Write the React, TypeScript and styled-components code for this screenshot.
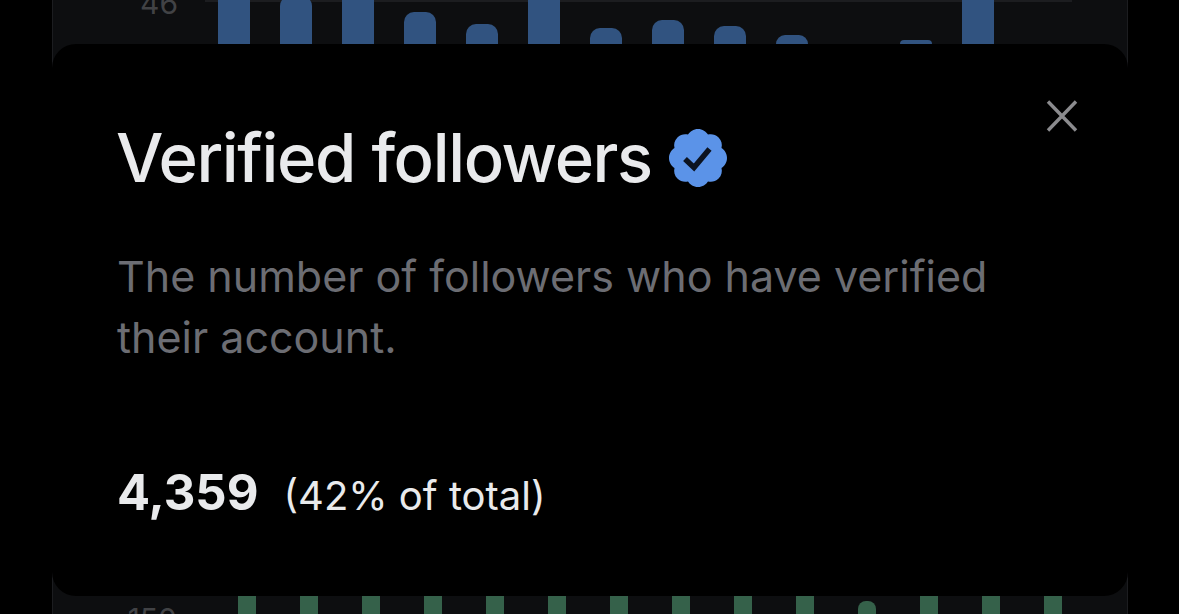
import React from 'react'
import styled, { createGlobalStyle } from 'styled-components'

const blueBars = [
  { height: 48, radius: 0 },
  { height: 48, radius: 10 },
  { height: 48, radius: 0 },
  { height: 32, radius: 10 },
  { height: 20, radius: 10 },
  { height: 48, radius: 0 },
  { height: 16, radius: 10 },
  { height: 24, radius: 10 },
  { height: 18, radius: 10 },
  { height: 9, radius: 10 },
  { height: 0, radius: 0 },
  { height: 4, radius: 10 },
  { height: 48, radius: 0 },
]
const greenBars = [18, 18, 18, 18, 18, 18, 18, 18, 18, 18, 13, 18, 18, 18]

const App = () => {
  return (
    <>
      <GlobalStyle />
      <StyledPage>
        <StyledBackdrop>
          <StyledTopChart>
            <StyledGridLine />
            <StyledTopAxis>46</StyledTopAxis>
            <StyledBlueBars>
              {blueBars.map((bar, i) => (
                <StyledBlueBar key={i} $height={bar.height} $radius={bar.radius} />
              ))}
            </StyledBlueBars>
          </StyledTopChart>
          <StyledBottomChart>
            <StyledBottomAxis>150</StyledBottomAxis>
            <StyledGreenBars>
              {greenBars.map((height, i) => (
                <StyledGreenBar key={i} $height={height} />
              ))}
            </StyledGreenBars>
          </StyledBottomChart>
        </StyledBackdrop>
        <StyledSheet>
          <StyledCloseButton aria-label="Close">
            <svg width="32" height="32" viewBox="0 0 32 32" fill="none">
              <path d="M2 1.500 L30 30.500 M30 1.500 L2 30.500" stroke="#8b8b8e" strokeWidth="3.4" />
            </svg>
          </StyledCloseButton>
          <StyledTitleRow>
            <StyledTitle>Verified followers</StyledTitle>
            <svg width="60" height="60" viewBox="0 0 60 60">
              <path
                fill="#5b93e8"
                d="M30 1c4.500 0 8 2.500 10 5.500 3.600-.9 7.500-.1 10.600 2.900 3 3.100 3.800 7 2.900 10.600 3 2 5.500 5.500 5.500 10s-2.500 8-5.500 10c.9 3.600.1 7.500-2.900 10.600-3.100 3-7 3.800-10.600 2.900-2 3-5.500 5.500-10 5.500s-8-2.500-10-5.500c-3.600.9-7.500.1-10.600-2.900-3-3.100-3.800-7-2.900-10.600-3-2-5.500-5.500-5.500-10s2.500-8 5.500-10c-.9-3.600-.1-7.500 2.900-10.600 3.100-3 7-3.800 10.600-2.900 2-3 5.500-5.500 10-5.500z"
              />
              <path d="M17 31 L26 39.500 L41.500 21" fill="none" stroke="#0c1320" strokeWidth="5.500" />
            </svg>
          </StyledTitleRow>
          <StyledDescription>
            The number of followers who have verified
            <br />
            their account.
          </StyledDescription>
          <StyledStats>
            <StyledCount>4,359</StyledCount>
            <StyledShare>(42% of total)</StyledShare>
          </StyledStats>
        </StyledSheet>
      </StyledPage>
    </>
  )
}
export default App

const GlobalStyle = createGlobalStyle`
  html, body {
    margin: 0;
    background: #000;
  }
`
const StyledPage = styled.div`
  position: relative;
  width: 1179px;
  height: 614px;
  overflow: hidden;
  background: #000;
  font-family: Inter, 'Liberation Sans', sans-serif;
`
const StyledBackdrop = styled.div`
  box-sizing: border-box;
  display: flex;
  flex-direction: column;
  justify-content: space-between;
  width: 1076px;
  height: 614px;
  margin-left: 52px;
  background: #0d0e10;
  border-left: 1px solid #1c1d20;
  border-right: 1px solid #1c1d20;
`
const StyledTopChart = styled.div`
  position: relative;
  display: flex;
  align-items: flex-end;
  height: 44px;
  overflow: hidden;
`
const StyledGridLine = styled.div`
  position: absolute;
  top: 0;
  left: 152px;
  width: 867px;
  height: 2px;
  background: #1c1d20;
`
const StyledTopAxis = styled.span`
  position: absolute;
  right: 949px;
  top: -13px;
  font-size: 30px;
  line-height: 32px;
  color: #414245;
`
const StyledBlueBars = styled.div`
  position: relative;
  display: flex;
  align-items: flex-end;
  gap: 30px;
  height: 44px;
  margin-left: 165px;
`
const StyledBlueBar = styled.div<{ $height: number; $radius: number }>`
  flex: none;
  width: 32px;
  height: ${(p) => p.$height}px;
  background: #315380;
  border-radius: ${(p) => p.$radius}px ${(p) => p.$radius}px 0 0;
`
const StyledBottomChart = styled.div`
  position: relative;
  display: flex;
  align-items: flex-end;
  height: 18px;
`
const StyledBottomAxis = styled.span`
  position: absolute;
  right: 950px;
  top: 7px;
  font-size: 30px;
  line-height: 32px;
  color: #414245;
`
const StyledGreenBars = styled.div`
  display: flex;
  align-items: flex-end;
  gap: 44px;
  height: 18px;
  margin-left: 185px;
`
const StyledGreenBar = styled.div<{ $height: number }>`
  flex: none;
  width: 18px;
  height: ${(p) => p.$height}px;
  background: #35614a;
  border-radius: ${(p) => (p.$height < 18 ? '8px 8px 0 0' : '0')};
`
const StyledSheet = styled.section`
  position: absolute;
  top: 44px;
  left: 52px;
  box-sizing: border-box;
  width: 1076px;
  height: 552px;
  padding: 74px 65px 0;
  background: #000;
  border-radius: 24px;
`
const StyledCloseButton = styled.button`
  position: absolute;
  top: 56px;
  right: 50px;
  display: block;
  width: 32px;
  height: 32px;
  padding: 0;
  border: 0;
  background: none;
`
const StyledTitleRow = styled.div`
  display: flex;
  align-items: center;
  gap: 16px;
  height: 80px;
`
const StyledTitle = styled.h1`
  margin: 0 0 0 -1px;
  font-size: 67px;
  font-weight: 500;
  line-height: 80px;
  letter-spacing: -1.4px;
  color: #e9eaec;
`
const StyledDescription = styled.p`
  margin: 48px 0 0;
  font-size: 43px;
  line-height: 61px;
  color: #6c6d73;
`
const StyledStats = styled.div`
  display: flex;
  align-items: baseline;
  gap: 25px;
  margin-top: 95px;
`
const StyledCount = styled.span`
  font-size: 49px;
  font-weight: 700;
  line-height: 60px;
  color: #e9eaec;
`
const StyledShare = styled.span`
  font-size: 40px;
  line-height: 60px;
  color: #e9eaec;
`
